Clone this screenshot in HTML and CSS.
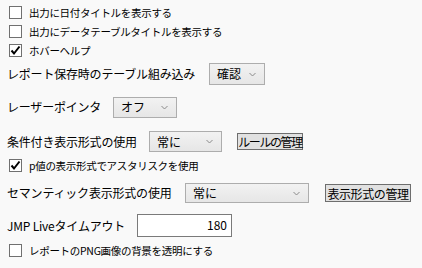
FILE: index.html
```html
<!DOCTYPE html>
<html lang="ja">
<head>
<meta charset="utf-8">
<link rel="stylesheet" href="styles.css">
</head>
<body>
<div class="panel">
  <div class="row r1">
    <span class="cb"></span><span class="cb-label">出力に日付タイトルを表示する</span>
  </div>
  <div class="row r2">
    <span class="cb"></span><span class="cb-label">出力にデータテーブルタイトルを表示する</span>
  </div>
  <div class="row r3">
    <span class="cb checked"><svg viewBox="0 0 13 13" width="13" height="13"><path d="M2.5 6.5 L5 9.5 L10.5 2.5" fill="none" stroke="#000" stroke-width="2"/></svg></span><span class="cb-label">ホバーヘルプ</span>
  </div>
  <div class="row r4">
    <span class="label w-embed">レポート保存時のテーブル組み込み</span>
    <span class="select s-embed"><span class="sel-text">確認</span><svg class="chev" viewBox="0 0 7 5" width="7" height="5"><path d="M0.5 1 L3.5 4 L6.5 1" fill="none" stroke="#8a8a8a" stroke-width="1"/></svg></span>
  </div>
  <div class="row r5">
    <span class="label w-laser">レーザーポインタ</span>
    <span class="select s-laser"><span class="sel-text">オフ</span><svg class="chev" viewBox="0 0 7 5" width="7" height="5"><path d="M0.5 1 L3.5 4 L6.5 1" fill="none" stroke="#8a8a8a" stroke-width="1"/></svg></span>
  </div>
  <div class="row r6">
    <span class="label w-cond">条件付き表示形式の使用</span>
    <span class="select s-cond"><span class="sel-text">常に</span><svg class="chev" viewBox="0 0 7 5" width="7" height="5"><path d="M0.5 1 L3.5 4 L6.5 1" fill="none" stroke="#8a8a8a" stroke-width="1"/></svg></span>
    <span class="btn b-rule">ルールの管理</span>
  </div>
  <div class="row r7">
    <span class="cb checked"><svg viewBox="0 0 13 13" width="13" height="13"><path d="M2.5 6.5 L5 9.5 L10.5 2.5" fill="none" stroke="#000" stroke-width="2"/></svg></span><span class="cb-label">p値の表示形式でアスタリスクを使用</span>
  </div>
  <div class="row r8">
    <span class="label w-sem">セマンティック表示形式の使用</span>
    <span class="select s-sem"><span class="sel-text">常に</span><svg class="chev" viewBox="0 0 7 5" width="7" height="5"><path d="M0.5 1 L3.5 4 L6.5 1" fill="none" stroke="#8a8a8a" stroke-width="1"/></svg></span>
    <span class="btn b-fmt">表示形式の管理</span>
  </div>
  <div class="row r9">
    <span class="label w-live">JMP Liveタイムアウト</span>
    <span class="input">180</span>
  </div>
  <div class="row r10">
    <span class="cb"></span><span class="cb-label">レポートのPNG画像の背景を透明にする</span>
  </div>
</div>
</body>
</html>
```

FILE: styles.css
```css
html, body {
  margin: 0;
  padding: 0;
  background: #f9f9f9;
}
body {
  width: 422px;
  height: 268px;
  overflow: hidden;
  font-family: "Noto Sans CJK JP", "Noto Sans", sans-serif;
  color: #000;
}
.panel {
  padding-top: 3px;
  display: flex;
  flex-direction: column;
}
.row {
  display: flex;
  align-items: center;
  padding-left: 7px;
  white-space: nowrap;
}
.r1, .r2, .r3 { height: 19px; }
.r4 { height: 28px; }
.r5 { height: 38px; }
.r6 { height: 31px; }
.r7 { height: 17px; }
.r8 { height: 38px; }
.r9 { height: 27px; }
.r10 { height: 23px; }

.cb {
  box-sizing: border-box;
  width: 13px;
  height: 13px;
  margin-left: 2px;
  border: 1px solid #707070;
  background: #fff;
  position: relative;
  flex: none;
}
.cb svg {
  position: absolute;
  left: -1px;
  top: -1px;
}
.cb-label {
  margin-left: 7px;
  font-size: 10.5px;
  letter-spacing: -0.3px;
  line-height: 13px;
}
.label {
  font-size: 12px;
  letter-spacing: -0.2px;
  line-height: 16px;
  flex: none;
}
.w-embed { width: 202px; }
.w-laser { width: 106px; }
.w-cond { width: 142px; }
.w-sem { width: 178px; }
.w-live { width: 130px; }

.select {
  box-sizing: border-box;
  height: 22px;
  border: 1px solid #adadad;
  background: linear-gradient(#f2f2f2, #e6e6e6);
  display: flex;
  align-items: center;
  justify-content: space-between;
  padding: 0 8px 0 7px;
  flex: none;
}
.sel-text {
  font-size: 12px;
  line-height: 16px;
}
.s-embed { width: 56px; }
.s-laser { width: 64px; height: 21px; }
.s-cond { width: 73px; height: 21px; }
.s-sem { width: 124px; height: 20px; }

.btn {
  box-sizing: border-box;
  border: 1px solid #6e6e6e;
  background: #e1e1e1;
  font-size: 12px;
  line-height: 15px;
  display: flex;
  align-items: center;
  justify-content: center;
  flex: none;
}
.b-rule {
  width: 66px;
  height: 17px;
  margin-left: 15px;
  letter-spacing: -1.4px;
}
.b-fmt {
  width: 86px;
  height: 18px;
  margin-left: 16px;
  letter-spacing: -0.4px;
}
.input {
  box-sizing: border-box;
  width: 95px;
  height: 23px;
  border: 1px solid #7a7a7a;
  background: #fff;
  font-size: 12px;
  line-height: 16px;
  text-align: right;
  padding: 2px 4px 0 0;
  display: block;
  flex: none;
}
```
